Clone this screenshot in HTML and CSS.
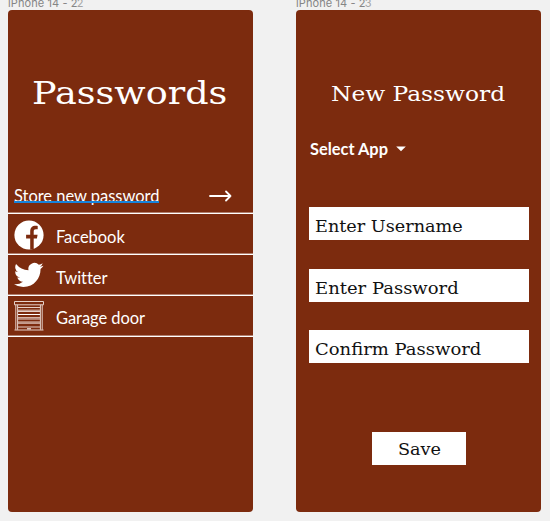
FILE: index.html
```
<!DOCTYPE html>
<html lang="en">
<head>
<meta charset="utf-8">
<title>Passwords</title>
<link rel="stylesheet" href="styles.css">
</head>
<body>
<main class="board">
  <section class="frame">
    <div class="frame-label">iPhone 14 - 2<span class="faint">2</span></div>
    <div class="phone">
      <h1 class="title"><span>Passwords</span></h1>
      <div class="row store">
        <a class="link">Store new password</a>
        <svg class="arrow" width="24" height="14" viewBox="0 0 24 14" fill="none" stroke="#fff" stroke-width="1.8" stroke-linecap="round" stroke-linejoin="round"><path d="M1 7H21.500M17 2.500l4.500 4.500-4.500 4.500"/></svg>
      </div>
      <div class="row facebook">
        <svg class="icon" width="30" height="30" viewBox="0 0 30 30"><circle cx="15" cy="15" r="14.600" fill="#fff"/><path class="cut" d="M16.200 29.400V18.500h-4.100v-3.800h4.100v-3.200c0-3.900 2-5.800 5.500-5.800.9 0 1.500.1 2 .2v3.400h-1.800c-1.600 0-2.200.8-2.200 2.400v3h3.900l-.7 3.800h-3.200v10.500c-1.100.4-2.300.5-3.500.4z"/></svg>
        <span class="name">Facebook</span>
      </div>
      <div class="row twitter">
        <svg class="icon" width="30" height="26" viewBox="0 0 24 20"><path fill="#fff" d="M23.6 2.6a9.500 9.500 0 0 1-2.780.760 4.860 4.860 0 0 0 2.130-2.680 9.700 9.700 0 0 1-3.080 1.180 4.850 4.850 0 0 0-8.250 4.420A13.750 13.750 0 0 1 1.640 1.220a4.850 4.850 0 0 0 1.500 6.470 4.800 4.800 0 0 1-2.200-.6v.06a4.850 4.850 0 0 0 3.890 4.750 4.900 4.900 0 0 1-2.190.08 4.850 4.850 0 0 0 4.530 3.360A9.720 9.720 0 0 1 0 17.350a13.700 13.700 0 0 0 7.430 2.180c8.910 0 13.780-7.380 13.780-13.780l-.02-.63A9.800 9.800 0 0 0 23.600 2.600z"/></svg>
        <span class="name">Twitter</span>
      </div>
      <div class="row garage">
        <svg class="icon" width="30" height="30" viewBox="0 0 30 30" fill="none" stroke="#e5d0c8" stroke-width="1"><path d="M.5.5h29v3.300H.5zM1.800 3.800v25M3.600 3.800v25M26.400 3.800v25M28.200 3.800v25M.5 29h29M4 6.500h22M4 9.200h22M4 10.500h22M4 16.700h22M4 18h22M4 21h22M4 22.200h22M4 26h22"/><path stroke="#fff" d="M4 13.500h22M13 27.800h4"/></svg>
        <span class="name">Garage door</span>
      </div>
    </div>
  </section>
  <section class="frame">
    <div class="frame-label">iPhone 14 - 2<span class="faint">3</span></div>
    <div class="phone">
      <h2 class="subtitle"><span>New Password</span></h2>
      <div class="select">Select App<svg width="10" height="6" viewBox="0 0 10 6"><path d="M.2.5h9.600L5 5.300z" fill="#fff"/></svg></div>
      <div class="field"><span>Enter Username</span></div>
      <div class="field wide"><span>Enter Password</span></div>
      <div class="field wide"><span>Confirm Password</span></div>
      <div class="save"><span>Save</span></div>
    </div>
  </section>
</main>
</body>
</html>
```
FILE: styles.css
```
* { box-sizing: border-box; }
body { margin: 0; background: #f1f1f1; width: 550px; height: 521px; overflow: hidden; }
.board { display: flex; gap: 43px; padding-left: 8px; }
.frame { width: 245px; }
.frame-label { height: 10px; line-height: 14px; margin-top: -4px; margin-bottom: 4px; font-family: Inter, sans-serif; font-size: 11px; letter-spacing: .1px; color: #858585; white-space: nowrap; }
.faint { opacity: .7; margin-left: -1px; }
.phone { height: 501.500px; border-radius: 4px; background: #7c2b0e; color: #fff; font-family: Lato, sans-serif; }
.title, .subtitle { margin: 0; font-family: "DejaVu Serif", serif; font-weight: 400; white-space: nowrap; }
.title { height: 163px; padding: 63px 0 0 24px; font-size: 31px; line-height: 40px; }
.title span, .subtitle span, .field span, .save span { display: inline-block; transform-origin: left center; }
.title span { transform: scaleX(1.180); }
.row { display: flex; align-items: center; height: 41px; padding-left: 6px; border-bottom: 1.500px solid #fff; box-shadow: inset 0 -1px rgba(255, 255, 255, .4); font-size: 16.500px; line-height: 22px; white-space: nowrap; }
.icon { flex: none; margin-right: 12px; }
.name { padding-top: 6px; letter-spacing: -.05px; }
.facebook .icon { margin-top: 2px; }
.garage .name { padding-top: 4px; }
.cut { fill: #7c2b0e; }
.store { justify-content: space-between; padding-right: 20px; }
.link { position: relative; height: 22px; margin-top: 6px; letter-spacing: -.03px; }
/* the underline runs over the feet of the letters */
.link::after { content: ""; position: absolute; left: 0; right: 0; bottom: 4px; height: 2px; background: #1684dc; }
.arrow { margin-top: 5px; }
.subtitle { height: 128px; padding: 70px 0 0 35px; font-size: 21px; line-height: 28px; }
.subtitle span { transform: scaleX(1.110); }
.select { display: flex; align-items: center; gap: 8px; height: 22px; margin: 0 0 47px 14px; font-size: 16.400px; font-weight: 700; line-height: 22px; }
.field, .save { background: #fff; color: #111; font-family: "DejaVu Serif", serif; font-size: 16.500px; white-space: nowrap; height: 33px; line-height: 39px; }
.field { width: 220px; margin: 0 0 28.700px 13px; padding-left: 6px; }
.field span { transform: scaleX(1.070); }
.field.wide span { transform: scaleX(1.090); }
.save { width: 94px; margin: 69px 0 0 76px; padding-left: 26px; line-height: 36px; }
.save span { transform: scaleX(1.070); }
```
